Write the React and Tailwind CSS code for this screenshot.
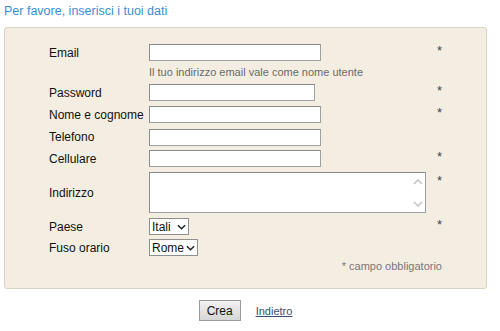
import React from 'react';

const font = { fontFamily: '"Liberation Sans", Arial, sans-serif' };

function Star({ top }) {
    return <span className={`text-[13px] text-[#444] leading-none ${top ? 'self-start mt-[5px]' : '-mt-[4px]'}`}>*</span>;
}

function Row({ label, h, children, star, starTop }) {
    return (
        <div className={`flex items-center ${h}`}>
            <div className="w-[100px] text-[12px] text-[#111] whitespace-nowrap">{label}</div>
            <div className="w-[288px] flex items-center">{children}</div>
            {star && <Star top={starTop} />}
        </div>
    );
}

function Input({ w = 'w-[172px]' }) {
    return <input type="text" className={`${w} h-[17px] bg-white border border-[#a0a0a0] border-t-[#8a8a8a] border-l-[#8a8a8a] outline-none`} />;
}

function Chevron({ className }) {
    return (
        <svg viewBox="0 0 10 6" className={className} fill="none" stroke="currentColor" strokeWidth="1.6">
            <path d="M1 1l4 4 4-4" />
        </svg>
    );
}

function Select({ value, w }) {
    return (
        <div className={`${w} h-[17px] bg-white border border-[#8f8f8f] flex items-center justify-between pl-[2px] pr-[2px] text-[12px] text-[#111] leading-none`}>
            <span>{value}</span>
            <Chevron className="w-[9px] h-[6px] text-[#222]" />
        </div>
    );
}

export default function App() {
    return (
        <div className="w-[500px] h-[331px] bg-white" style={font}>
            <div className="h-[27px] pl-[4px] pt-[2px] text-[12.5px] text-[#3a8ed6]">Per favore, inserisci i tuoi dati</div>

            <div className="ml-[4px] w-[483px] h-[262px] bg-[#f3eee1] border border-[#d9d3c5] rounded-[3px] pt-[14px] pl-[44px]">
                <Row label="Email" h="h-[21px]" star>
                    <Input />
                </Row>
                <div className="flex items-center h-[19px]">
                    <div className="w-[100px]" />
                    <span className="text-[11px] text-[#6a6a6a]">Il tuo indirizzo email vale come nome utente</span>
                </div>
                <Row label="Password" h="h-[21px]" star>
                    <Input w="w-[166px]" />
                </Row>
                <Row label="Nome e cognome" h="h-[23px]" star>
                    <Input />
                </Row>
                <Row label="Telefono" h="h-[22px]">
                    <Input />
                </Row>
                <Row label="Cellulare" h="h-[21px]" star>
                    <Input />
                </Row>
                <Row label="Indirizzo" h="h-[47px]" star starTop>
                    <div className="relative w-[277px] h-[41px]">
                        <textarea className="w-full h-full resize-none bg-white border border-[#a0a0a0] border-t-[#8a8a8a] border-l-[#8a8a8a] outline-none block" />
                        <Chevron className="absolute right-[3px] top-[7px] w-[10px] h-[6px] text-[#c4c4c4] rotate-180" />
                        <Chevron className="absolute right-[3px] bottom-[6px] w-[10px] h-[6px] text-[#c4c4c4]" />
                    </div>
                </Row>
                <Row label="Paese" h="h-[21px]" star>
                    <Select value="Itali" w="w-[40px]" />
                </Row>
                <Row label="Fuso orario" h="h-[21px]">
                    <Select value="Rome" w="w-[49px]" />
                </Row>
                <div className="h-[16px] flex items-center justify-end w-[393px]">
                    <span className="text-[11px] text-[#777]">* campo obbligatorio</span>
                </div>
            </div>

            <div className="w-[491px] flex justify-center items-center gap-[15px] mt-[11px]">
                <button className="w-[42px] h-[21px] border border-[#9a9a9a] bg-gradient-to-b from-[#f2f2f2] to-[#d6d6d6] text-[12px] text-[#111] leading-none">Crea</button>
                <a href="#" className="text-[11px] text-[#3d4d6e] underline mt-[1px]">Indietro</a>
            </div>
        </div>
    );
}
